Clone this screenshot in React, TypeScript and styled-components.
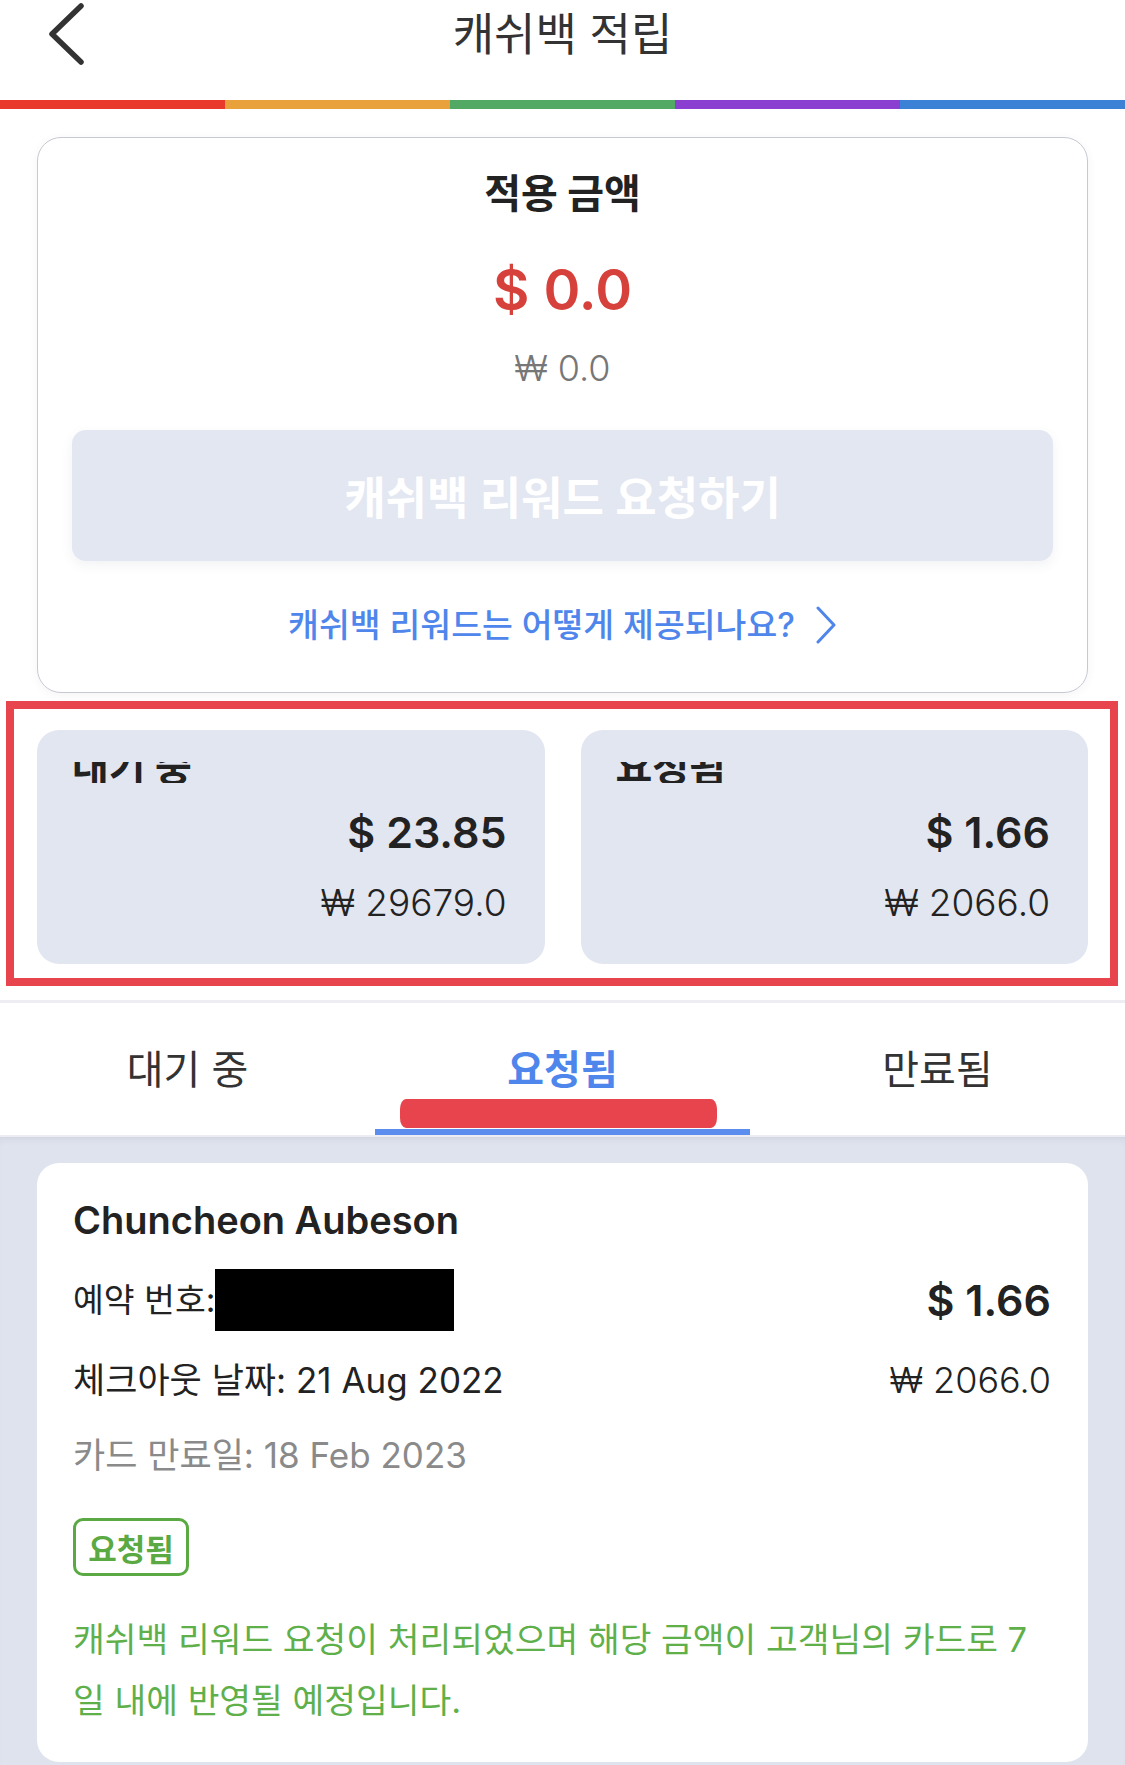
import * as React from 'react';
import styled, { createGlobalStyle } from 'styled-components';

const GlobalStyle = createGlobalStyle`
  body {
    margin: 0;
    background: #ffffff;
    font-family: Inter, "Noto Sans CJK KR", sans-serif;
  }
`;

const Page = styled.div`
  width: 1125px;
  min-height: 1765px;
  background: #ffffff;
  color: #222;
`;

const Header = styled.header`
  display: grid;
  grid-template-columns: 140px 1fr 140px;
  height: 100px;
`;

const BackButton = styled.button`
  border: 0;
  background: none;
  padding: 0;
  margin: 2px 0 0 45px;
  width: 42px;
  height: 64px;
  align-self: start;
`;

const Title = styled.h1`
  margin: 0;
  padding-top: 8px;
  text-align: center;
  font-size: 45px;
  line-height: 54px;
  font-weight: 400;
  color: #333;
`;

const Rainbow = styled.div`
  display: flex;
  height: 9px;
`;

const Stripe = styled.span<{ $color: string }>`
  flex: 1;
  background: ${(p) => p.$color};
`;

const Main = styled.main`
  padding: 28px 37px 0;
`;

const SummaryCard = styled.section`
  box-sizing: border-box;
  height: 556px;
  border: 1px solid #c6c9d2;
  border-radius: 24px;
  box-shadow: 0 2px 10px rgba(60, 70, 100, 0.06);
  display: flex;
  flex-direction: column;
  align-items: center;
  padding: 30px 34px 0;
`;

const SummaryTitle = styled.h2`
  margin: 0;
  font-size: 40px;
  line-height: 52px;
  font-weight: 700;
  color: #222;
`;

const BigAmount = styled.div`
  margin-top: 36px;
  font-size: 56px;
  line-height: 68px;
  font-weight: 600;
  color: #d6423b;
`;

const WonAmount = styled.div`
  margin-top: 22px;
  font-size: 36px;
  line-height: 44px;
  font-weight: 300;
  color: #777;
`;

const RequestButton = styled.button`
  margin-top: 40px;
  align-self: stretch;
  height: 131px;
  border: 0;
  border-radius: 14px;
  background: #e3e7f1;
  box-shadow: 0 4px 12px rgba(80, 90, 120, 0.08);
  color: #ffffff;
  font-family: inherit;
  font-size: 45px;
  font-weight: 600;
`;

const HelpLink = styled.a`
  margin-top: 44px;
  display: flex;
  align-items: center;
  gap: 20px;
  font-size: 33.5px;
  line-height: 40px;
  font-weight: 500;
  color: #4f86eb;
`;

const Highlight = styled.section`
  margin: 8px 7px 0 6px;
  border: 8px solid #e8444d;
  padding: 21px 22px 14px 23px;
  display: grid;
  grid-template-columns: 1fr 1fr;
  gap: 36px;
`;

const StatCard = styled.div`
  box-sizing: border-box;
  height: 234px;
  border-radius: 22px;
  background: #e2e6f1;
  padding: 32px 38px 0 35px;
  display: flex;
  flex-direction: column;
`;

/* the label is scrolled under the card top in the original, only its lower half shows */
const StatLabelClip = styled.div`
  height: 21px;
  overflow: hidden;
  display: flex;
  align-items: flex-end;
`;

const StatLabel = styled.span`
  font-size: 40px;
  line-height: 0.8;
  font-weight: 700;
  color: #222;
`;

const StatAmount = styled.div`
  margin-top: 23px;
  text-align: right;
  font-size: 43px;
  line-height: 52px;
  font-weight: 600;
  color: #222;
`;

const StatWon = styled.div`
  margin-top: 23px;
  text-align: right;
  font-size: 37px;
  line-height: 44px;
  font-weight: 300;
  color: #222;
`;

const TabBar = styled.nav`
  margin-top: 14px;
  display: flex;
  height: 132px;
  border-top: 3px solid #eeedf3;
  border-bottom: 2px solid #ecedf2;
`;

const Tab = styled.div<{ $active?: boolean }>`
  flex: 1;
  position: relative;
  display: flex;
  align-items: center;
  justify-content: center;
  padding-bottom: 4px;
  font-size: 40px;
  font-weight: ${(p) => (p.$active ? 600 : 400)};
  color: ${(p) => (p.$active ? '#4f86eb' : '#333')};
`;

const Indicator = styled.span`
  position: absolute;
  left: 0;
  right: 0;
  bottom: 0;
  height: 6px;
  background: #5b8def;
`;

const Scribble = styled.span`
  position: absolute;
  left: 25px;
  width: 317px;
  bottom: 7px;
  height: 29px;
  border-radius: 6px / 10px;
  background: #e8444d;
`;

const Content = styled.div`
  background: #dfe3ee;
  box-shadow: inset 0 6px 8px -6px rgba(90, 100, 130, 0.18);
  padding: 26px 37px 3px;
`;

const BookingCard = styled.article`
  background: #ffffff;
  border-radius: 22px;
  padding: 33px 37px 31px 36px;
`;

const HotelName = styled.h3`
  margin: 0;
  font-size: 38px;
  line-height: 48px;
  font-weight: 600;
  color: #222;
`;

const Row = styled.div<{ $gap: number }>`
  margin-top: ${(p) => p.$gap}px;
  display: flex;
  align-items: center;
  justify-content: space-between;
`;

const Info = styled.div<{ $muted?: boolean; $size?: number }>`
  display: flex;
  align-items: center;
  font-size: ${(p) => p.$size ?? 35}px;
  line-height: 44px;
  color: ${(p) => (p.$muted ? '#8a8a8a' : '#222')};
`;

const Redacted = styled.span`
  display: inline-block;
  width: 239px;
  height: 62px;
  background: #000;
`;

const RowAmount = styled.div`
  font-size: 43px;
  line-height: 52px;
  font-weight: 600;
  color: #222;
`;

const RowWon = styled.div`
  font-size: 36px;
  line-height: 44px;
  font-weight: 300;
  color: #222;
`;

const Badge = styled.span`
  margin-top: 41px;
  box-sizing: border-box;
  display: inline-flex;
  align-items: center;
  justify-content: center;
  width: 116px;
  height: 58px;
  border: 3px solid #5aa943;
  border-radius: 10px;
  font-size: 31px;
  font-weight: 700;
  color: #5aa943;
`;

const Notice = styled.p`
  margin: 33px 0 0;
  font-size: 34.5px;
  line-height: 61px;
  color: #5fb04a;
`;

const BackIcon = () => (
  <svg width="42" height="64" viewBox="0 0 42 64">
    <polyline
      points="36,4 7,32 36,60"
      fill="none"
      stroke="#333"
      strokeWidth="5.5"
      strokeLinecap="round"
      strokeLinejoin="round"
    />
  </svg>
);

const ChevronRight = () => (
  <svg width="22" height="38" viewBox="0 0 22 38">
    <polyline
      points="3,2 19,19 3,36"
      fill="none"
      stroke="#4f86eb"
      strokeWidth="3"
      strokeLinecap="round"
      strokeLinejoin="round"
    />
  </svg>
);

const stripes = ['#e8392a', '#e9a23b', '#52a963', '#8a3fd1', '#3b82d6'];

const stats = [
  { label: '대기 중', usd: '$ 23.85', krw: '₩ 29679.0' },
  { label: '요청됨', usd: '$ 1.66', krw: '₩ 2066.0' },
];

export default function App() {
  return (
    <Page>
      <GlobalStyle />
      <Header>
        <BackButton aria-label="back">
          <BackIcon />
        </BackButton>
        <Title>캐쉬백 적립</Title>
        <span />
      </Header>
      <Rainbow>
        {stripes.map((c) => (
          <Stripe key={c} $color={c} />
        ))}
      </Rainbow>

      <Main>
        <SummaryCard>
          <SummaryTitle>적용 금액</SummaryTitle>
          <BigAmount>$ 0.0</BigAmount>
          <WonAmount>₩ 0.0</WonAmount>
          <RequestButton disabled>캐쉬백 리워드 요청하기</RequestButton>
          <HelpLink>
            캐쉬백 리워드는 어떻게 제공되나요?
            <ChevronRight />
          </HelpLink>
        </SummaryCard>
      </Main>

      <Highlight>
        {stats.map((s) => (
          <StatCard key={s.label}>
            <StatLabelClip>
              <StatLabel>{s.label}</StatLabel>
            </StatLabelClip>
            <StatAmount>{s.usd}</StatAmount>
            <StatWon>{s.krw}</StatWon>
          </StatCard>
        ))}
      </Highlight>

      <TabBar>
        <Tab>대기 중</Tab>
        <Tab $active>
          요청됨
          <Scribble />
          <Indicator />
        </Tab>
        <Tab>만료됨</Tab>
      </TabBar>

      <Content>
        <BookingCard>
          <HotelName>Chuncheon Aubeson</HotelName>
          <Row $gap={25}>
            <Info $size={33.5}>
              예약 번호:
              <Redacted />
            </Info>
            <RowAmount>$ 1.66</RowAmount>
          </Row>
          <Row $gap={27}>
            <Info>체크아웃 날짜: 21 Aug 2022</Info>
            <RowWon>₩ 2066.0</RowWon>
          </Row>
          <Row $gap={31}>
            <Info $muted>카드 만료일: 18 Feb 2023</Info>
          </Row>
          <Badge>요청됨</Badge>
          <Notice>
            캐쉬백 리워드 요청이 처리되었으며 해당 금액이 고객님의 카드로 7
            <br />일 내에 반영될 예정입니다.
          </Notice>
        </BookingCard>
      </Content>
    </Page>
  );
}
